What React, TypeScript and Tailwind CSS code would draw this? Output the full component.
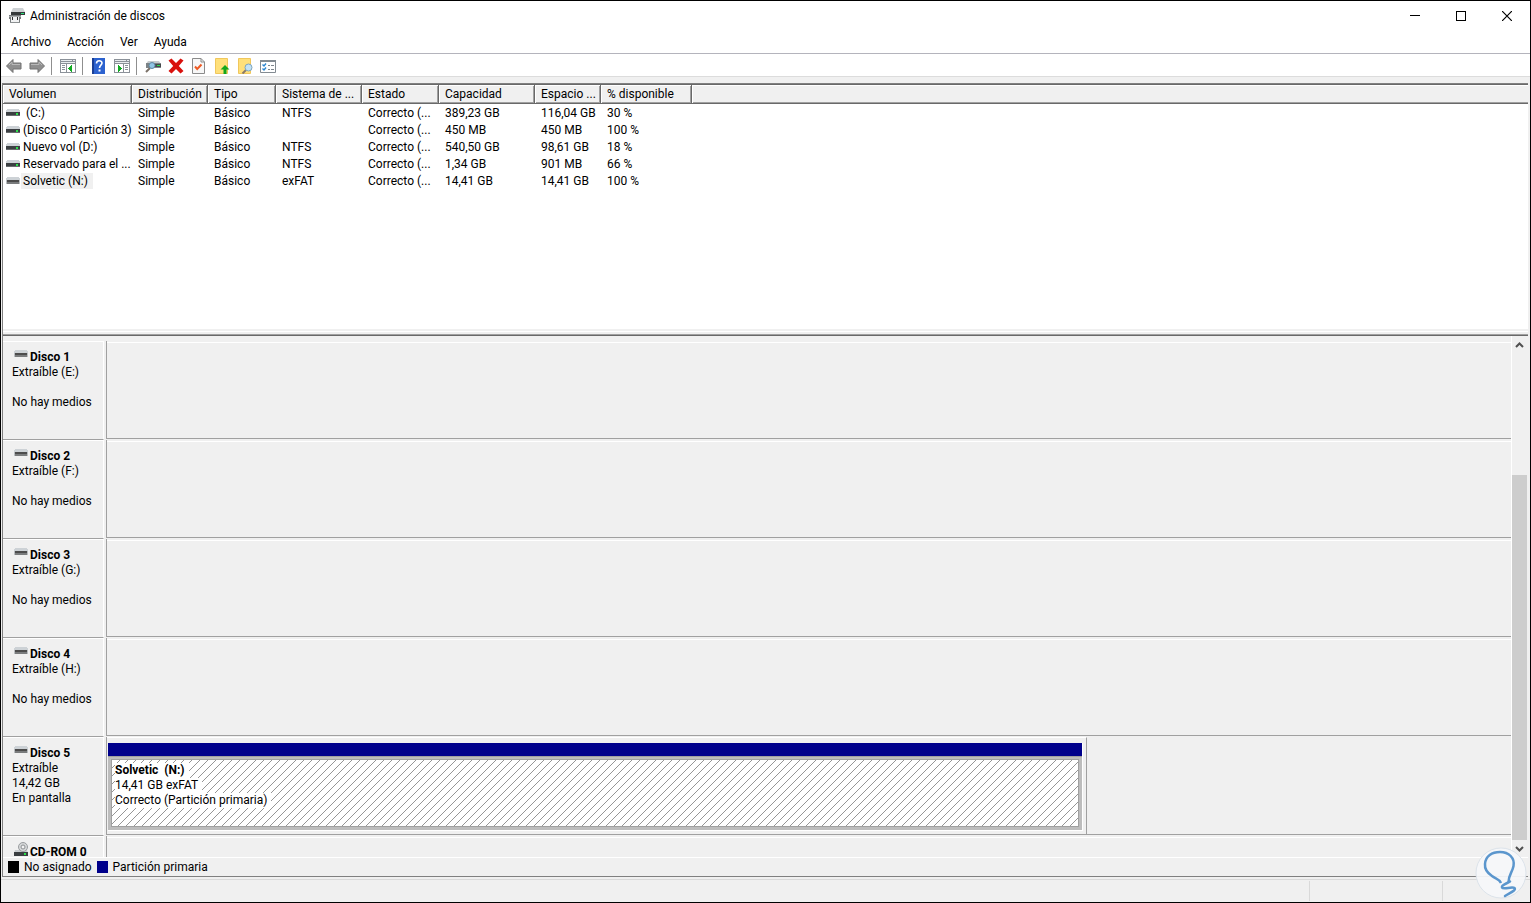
import type { ReactNode } from 'react';

const menus = ['Archivo', 'Acción', 'Ver', 'Ayuda'];

const columns = [
    { label: 'Volumen', width: 'w-[129px]' },
    { label: 'Distribución', width: 'w-[76px]' },
    { label: 'Tipo', width: 'w-[68px]' },
    { label: 'Sistema de ...', width: 'w-[86px]' },
    { label: 'Estado', width: 'w-[77px]' },
    { label: 'Capacidad', width: 'w-[96px]' },
    { label: 'Espacio ...', width: 'w-[66px]' },
    { label: '% disponible', width: 'w-[91px]' },
];

const volumes = [
    { name: ' (C:)', fs: 'NTFS', capacity: '389,23 GB', free: '116,04 GB', percent: '30 %' },
    { name: '(Disco 0 Partición 3)', fs: '', capacity: '450 MB', free: '450 MB', percent: '100 %' },
    { name: 'Nuevo vol (D:)', fs: 'NTFS', capacity: '540,50 GB', free: '98,61 GB', percent: '18 %' },
    { name: 'Reservado para el ...', fs: 'NTFS', capacity: '1,34 GB', free: '901 MB', percent: '66 %' },
    { name: 'Solvetic (N:)', fs: 'exFAT', capacity: '14,41 GB', free: '14,41 GB', percent: '100 %', removable: true },
];

const disks = [
    { name: 'Disco 1', lines: ['Extraíble (E:)', '', 'No hay medios'] },
    { name: 'Disco 2', lines: ['Extraíble (F:)', '', 'No hay medios'] },
    { name: 'Disco 3', lines: ['Extraíble (G:)', '', 'No hay medios'] },
    { name: 'Disco 4', lines: ['Extraíble (H:)', '', 'No hay medios'] },
    { name: 'Disco 5', lines: ['Extraíble', '14,42 GB', 'En pantalla'], partition: true },
];

function DriveIcon({ removable = false }: { removable?: boolean }) {
    return (
        <svg width="14" height="8" viewBox="0 0 14 8" className="shrink-0" shapeRendering="crispEdges" aria-hidden="true">
            <path d="M1 0h12v1h1v2H0V1h1z" fill="#cdd2d6" />
            <path d="M0 3h14v4H0z" fill={removable ? '#b9bdc0' : '#3b3f42'} />
            {removable ? (
                <>
                    <path d="M1 3h12v2H1z" fill="#4c4c4c" />
                    <path d="M1 5h12v2H1z" fill="#7a7c7d" />
                </>
            ) : (
                <>
                    <path d="M0 6h14v1H0z" fill="#686c6e" />
                    <path d="M10 4h2v2h-2z" fill="#2be04a" />
                </>
            )}
        </svg>
    );
}

function CdIcon() {
    return (
        <svg width="14" height="16" viewBox="0 0 14 16" className="shrink-0" aria-hidden="true">
            <path d="M1 9h12l1 3H0z" fill="#c9cdd0" />
            <circle cx="9" cy="6" r="4.500" fill="#d5d7d8" stroke="#9a9da0" />
            <circle cx="9" cy="6" r="2" fill="#f3f3f3" stroke="#8d9093" />
            <path d="M0 11h14v4H0z" fill="#3b3f42" />
            <path d="M10 12h2v2h-2z" fill="#2be04a" />
        </svg>
    );
}

function AppIcon() {
    return (
        <svg width="16" height="16" viewBox="0 0 16 16" aria-hidden="true">
            <path d="M4 0h10l2 4H2z" fill="#cdd1d4" />
            <path d="M2 4h14v3H2z" fill="#35393b" />
            <path d="M12 5h3v1h-3z" fill="#2be07a" />
            <path d="M0 7h12v3H0z" fill="#a9adaf" />
            <path d="M1 9h10v6H1z" fill="#f1f2f3" />
            <path d="M0 7h12v1H0zM0 9h2v2H0zM10 9h2v2h-2zM1 11h1v4H1zM10 11h1v4h-1z" fill="#75797b" />
            <path d="M3 9h1v3H3zM8 9h1v3H8z" fill="#2d2f31" />
            <path d="M1 14h10v1H1z" fill="#8c9092" />
        </svg>
    );
}

function Arrow({ flip = false }: { flip?: boolean }) {
    return (
        <svg width="16" height="16" viewBox="0 0 16 16" aria-hidden="true">
            <path
                d={flip ? 'M15.500 8 9 1.500V5H1v6h8v3.500z' : 'M.5 8 7 1.500V5h8v6H7v3.500z'}
                fill="#8f8f8f"
                stroke="#737373"
            />
            <path d={flip ? 'M2 6.500h8V4l3 3' : 'M3 7l3-3v2.500h8'} fill="none" stroke="#b9b9b9" />
        </svg>
    );
}

function PaneIcon({ right = false }: { right?: boolean }) {
    return (
        <svg width="16" height="14" viewBox="0 0 16 14" shapeRendering="crispEdges" aria-hidden="true">
            <path d="M0 0h16v14H0z" fill="#8b9199" />
            <path d="M1 1h11v1H1zM13 1h2v1h-2zM1 3h14v1H1z" fill="#e9ecef" />
            <path d="M1 5h14v8H1z" fill="#fff" />
            {right ? (
                <>
                    <path d="M9 5h1v8H9zM11 6h3v1h-3zM11 8h3v1h-3zM11 10h3v1h-3z" fill="#8b9199" />
                    <path d="M4 6h1v1h1v1h1v1h1v1H7v1H6v1H5v1H4z" fill="#10aa22" />
                </>
            ) : (
                <>
                    <path d="M6 5h1v8H6zM2 6h3v1H2zM2 8h3v1H2zM2 10h3v1H2z" fill="#8b9199" />
                    <path d="M12 6h-1v1h-1v1H9v1H8v1h1v1h1v1h1v1h1z" fill="#10aa22" />
                </>
            )}
        </svg>
    );
}

function HelpIcon() {
    return (
        <svg width="13" height="16" viewBox="0 0 13 16" aria-hidden="true">
            <path d="M0 0h13v16H0z" fill="#2c62cf" />
            <path d="M0 0h2v16H0z" fill="#1b3f94" />
            <path d="M4.500 5.500C4.500 1.800 10 2 10 5c0 2.200-2.500 2.200-2.500 5" fill="none" stroke="#fff" strokeWidth="1.600" />
            <path d="M6.500 11.500h2v2h-2z" fill="#fff" />
        </svg>
    );
}

function RescanIcon() {
    return (
        <svg width="16" height="16" viewBox="0 0 16 16" aria-hidden="true">
            <path d="M3 3h11l2 3H1z" fill="#c6cbce" />
            <path d="M1 5h15v5H1z" fill="#7d8386" />
            <path d="M9 6h7v3H9z" fill="#454a4d" />
            <path d="M12 7h3v1h-3z" fill="#2be04a" />
            <path d="M5 10l-4 4" stroke="#7b7168" strokeWidth="2" />
            <circle cx="7" cy="7.500" r="3" fill="#8fc4e4" stroke="#5f87a0" />
        </svg>
    );
}

function DeleteIcon() {
    return (
        <svg width="16" height="16" viewBox="0 0 16 16" aria-hidden="true">
            <path d="M3.500.5 8 5 12.500.5 15.500 2.500 10.800 8 15.500 13 12.500 15.500 8 11 3.500 15.500.5 13 5.200 8 .5 2.500z" fill="#d9110d" />
        </svg>
    );
}

function CheckDocIcon() {
    return (
        <svg width="13" height="16" viewBox="0 0 13 16" aria-hidden="true">
            <path d="M.5.5H9L12.500 4v11.500H.5z" fill="#f7f7f7" stroke="#8b8b8b" />
            <path d="M9 .5V4h3.500" fill="none" stroke="#8b8b8b" />
            <path d="M3 8.500 5.200 11 9.500 6.500" fill="none" stroke="#ee5a24" strokeWidth="2" />
        </svg>
    );
}

function FolderIcon({ search = false }: { search?: boolean }) {
    return (
        <svg width="16" height="16" viewBox="0 0 16 16" aria-hidden="true">
            <path d="M1.500.5h12v15h-12z" fill="#ffe07a" stroke="#f0c75c" />
            {search ? (
                <>
                    <path d="M9 12 5.500 15.500" stroke="#8a7a68" strokeWidth="2" />
                    <circle cx="11.500" cy="9.500" r="3.500" fill="#c3e2f5" stroke="#7fa6bd" />
                </>
            ) : (
                <path d="M11 7 15.500 11.500h-3V16H9.500v-4.500h-3z" fill="#12a71c" />
            )}
        </svg>
    );
}

function OptionsIcon() {
    return (
        <svg width="16" height="13" viewBox="0 0 16 13" aria-hidden="true">
            <path d="M.5.5h15v12H.5z" fill="#fff" stroke="#838b92" />
            <path d="M0 0h16v2H0z" fill="#838b92" />
            <path d="M2.500 4.500l1.500 1.500 2-2.500M2.500 8.500 4 10l2-2.500" fill="none" stroke="#2c87d2" strokeWidth="1.400" />
            <path d="M8 5.500h2M11 5.500h3M8 9.500h2M11 9.500h3" stroke="#7d858c" />
        </svg>
    );
}

function ToolButton({ label, children }: { label: string; children: ReactNode }) {
    return (
        <button type="button" aria-label={label} className="flex h-[20px] w-[23px] items-center justify-center">
            {children}
        </button>
    );
}

function Divider() {
    return <div className="mr-1 ml-[3px] h-[18px] w-px bg-[#8f8f8f]" />;
}

function Partition() {
    return (
        <div className="h-[97px] w-[69.8%] border-t border-r border-t-white border-r-[#a0a0a0] pt-[5px] pr-[3px] pl-px">
            <div className="border-r border-b border-white">
                <div className="h-[14px] border-b border-[#a0a0a0] bg-[#00008b]" />
                <div className="bg-[#bdbdbd] px-[3px] pt-[2px] pb-[3px]">
                    <div className="relative h-[68px] overflow-hidden border border-[#a0a0a0] bg-white">
                        <svg className="absolute inset-0 h-full w-full" shapeRendering="crispEdges" aria-hidden="true">
                            <defs>
                                <pattern id="hatch" width="8" height="8" patternUnits="userSpaceOnUse">
                                    <path
                                        d="M7 0h1v1H7zM6 1h1v1H6zM5 2h1v1H5zM4 3h1v1H4zM3 4h1v1H3zM2 5h1v1H2zM1 6h1v1H1zM0 7h1v1H0z"
                                        fill="#969696"
                                    />
                                </pattern>
                            </defs>
                            <rect width="100%" height="100%" fill="url(#hatch)" />
                        </svg>
                        <div className="relative flex flex-col items-start pt-[3px] pl-[3px] leading-[15px]">
                            <strong className="bg-white pr-1 whitespace-pre">Solvetic  (N:)</strong>
                            <span className="bg-white pr-1">14,41 GB exFAT</span>
                            <span className="bg-white pr-1">Correcto (Partición primaria)</span>
                        </div>
                    </div>
                </div>
            </div>
        </div>
    );
}

function DiskRow({ name, lines, children }: { name: string; lines: string[]; children?: ReactNode }) {
    return (
        <div className="flex h-[99px] shrink-0">
            <div className="w-[101px] shrink-0 border-t border-r border-b border-t-white border-r-white border-b-[#a0a0a0] pt-2 pl-[9px] leading-[15px] whitespace-nowrap">
                <div className="flex h-[15px] items-start gap-[2px] pl-[2px]">
                    <DriveIcon removable />
                    <strong>{name}</strong>
                </div>
                {lines.map((line, i) => (
                    <div key={i} className="h-[15px]">{line}</div>
                ))}
            </div>
            <div className="mb-px ml-[2px] flex-1 border-b border-l border-[#a0a0a0]">
                {children ?? <div className="mt-px h-px bg-white" />}
            </div>
        </div>
    );
}

function CdRomRow() {
    return (
        <div className="flex min-h-0 flex-1">
            <div className="w-[101px] shrink-0 border-t border-r border-white pt-1 pl-[11px] leading-[15px]">
                <div className="flex items-start gap-[2px] whitespace-nowrap">
                    <CdIcon />
                    <strong className="pt-1">CD-ROM 0</strong>
                </div>
            </div>
            <div className="ml-[2px] flex-1 border-l border-[#a0a0a0]">
                <div className="mt-px h-px bg-white" />
            </div>
        </div>
    );
}

function WatermarkBulb() {
    return (
        <svg className="absolute right-[3px] bottom-[3px]" width="52" height="52" viewBox="0 0 52 52" aria-hidden="true">
            <circle cx="26" cy="26" r="25" fill="#f6f8fa" fillOpacity="0.93" stroke="#dce3ea" />
            <path
                d="M26 36C24 31.500 21 32 17 29 12.500 26 9.500 22 10 17 10.500 9 17 5 25 5c9 0 15 6 13.500 14-1 6-5 9-5 16"
                fill="none"
                stroke="#5b96cd"
                strokeWidth="2.500"
            />
            <path
                d="M35 34.500C31 37 26 38 27 40.500c1.500 2.500 10-1.500 12.500.5 2 2.500-5 5-9.500 8"
                fill="none"
                stroke="#5b96cd"
                strokeWidth="2.500"
                strokeLinecap="round"
            />
        </svg>
    );
}

export default function App() {
    return (
        <div className="relative flex h-screen flex-col overflow-hidden border border-black bg-[#f0f0f0] font-[Roboto,'Open_Sans',sans-serif] text-[12px] text-black">
            <header className="flex h-[30px] shrink-0 items-center bg-white pl-2">
                <AppIcon />
                <h1 className="flex-1 pl-[5px]">Administración de discos</h1>
                <button type="button" aria-label="Minimizar" className="flex h-[28px] w-[46px] items-center justify-center">
                    <svg width="10" height="10" shapeRendering="crispEdges"><path d="M0 4h10v1H0z" /></svg>
                </button>
                <button type="button" aria-label="Maximizar" className="flex h-[28px] w-[46px] items-center justify-center">
                    <svg width="10" height="10" shapeRendering="crispEdges"><path d="M.5.5h9v9h-9z" fill="none" stroke="#000" /></svg>
                </button>
                <button type="button" aria-label="Cerrar" className="flex h-[28px] w-[46px] items-center justify-center">
                    <svg width="10" height="10"><path d="M0 0l10 10M10 0 0 10" fill="none" stroke="#000" strokeWidth="1.200" /></svg>
                </button>
            </header>

            <nav className="flex h-[23px] shrink-0 items-center gap-4 border-b border-[#b4b4bc] bg-white pl-[10px]">
                {menus.map((menu) => (
                    <button key={menu} type="button">{menu}</button>
                ))}
            </nav>

            <div className="flex h-[23px] shrink-0 items-center border-b border-[#dcdcdc] bg-white pt-[2px] pl-px">
                <ToolButton label="Atrás"><Arrow /></ToolButton>
                <ToolButton label="Adelante"><Arrow flip /></ToolButton>
                <Divider />
                <ToolButton label="Árbol de consola"><PaneIcon /></ToolButton>
                <Divider />
                <ToolButton label="Ayuda"><HelpIcon /></ToolButton>
                <ToolButton label="Panel de acciones"><PaneIcon right /></ToolButton>
                <Divider />
                <ToolButton label="Actualizar"><RescanIcon /></ToolButton>
                <ToolButton label="Eliminar"><DeleteIcon /></ToolButton>
                <ToolButton label="Propiedades"><CheckDocIcon /></ToolButton>
                <ToolButton label="Abrir"><FolderIcon /></ToolButton>
                <ToolButton label="Explorar"><FolderIcon search /></ToolButton>
                <ToolButton label="Opciones"><OptionsIcon /></ToolButton>
            </div>

            <main className="mr-[2px] ml-px mt-[6px] flex min-h-0 flex-1 flex-col border-t border-b border-l border-[#808080]">
                <section className="h-[252px] shrink-0 border-t border-b border-[#696969]">
                    <div className="h-[244px] bg-white">
                        <table className="w-full table-fixed border-separate border-spacing-0 text-left">
                            <thead>
                                <tr className="bg-[#f0f0f0] leading-[17px]">
                                    {columns.map((col) => (
                                        <th
                                            key={col.label}
                                            className={`${col.width} border-r border-b border-[#696969] p-0 pt-px pl-[6px] font-normal whitespace-nowrap shadow-[inset_1px_1px_0_#fff,inset_-1px_-1px_0_#a0a0a0]`}
                                        >
                                            {col.label}
                                        </th>
                                    ))}
                                    <th className="border-b border-[#696969] p-0 shadow-[inset_1px_1px_0_#fff,inset_0_-1px_0_#a0a0a0]" />
                                </tr>
                            </thead>
                            <tbody>
                                {volumes.map((v) => (
                                    <tr key={v.name} className="leading-[16px] whitespace-nowrap">
                                        <td className="p-0 pt-px pl-[3px]">
                                            <div className="flex items-center gap-px">
                                                <DriveIcon removable={v.removable} />
                                                <span className={`pl-[2px] whitespace-pre ${v.removable ? 'bg-[#f0f0f0] pr-[5px]' : ''}`}>{v.name}</span>
                                            </div>
                                        </td>
                                        <td className="p-0 pt-px pl-[6px]">Simple</td>
                                        <td className="p-0 pt-px pl-[6px]">Básico</td>
                                        <td className="p-0 pt-px pl-[6px]">{v.fs}</td>
                                        <td className="p-0 pt-px pl-[6px]">Correcto (...</td>
                                        <td className="p-0 pt-px pl-[6px]">{v.capacity}</td>
                                        <td className="p-0 pt-px pl-[6px]">{v.free}</td>
                                        <td className="p-0 pt-px pl-[6px]">{v.percent}</td>
                                        <td className="p-0" />
                                    </tr>
                                ))}
                            </tbody>
                        </table>
                    </div>
                    <div className="mt-[2px] h-px bg-white" />
                    <div className="mt-[2px] h-px bg-[#a0a0a0]" />
                </section>

                <section className="flex min-h-0 flex-1">
                    <div className="flex min-w-0 flex-1 flex-col pt-[5px]">
                        {disks.map((disk) => (
                            <DiskRow key={disk.name} name={disk.name} lines={disk.lines}>
                                {disk.partition && <Partition />}
                            </DiskRow>
                        ))}
                        <CdRomRow />
                    </div>
                    <div className="mr-px flex w-4 shrink-0 flex-col items-center border-l border-white bg-[#f0f0f0]">
                        <button type="button" aria-label="Desplazar arriba" className="flex h-[17px] w-full items-center justify-center">
                            <svg width="9" height="6"><path d="M1 5l3.500-3.500L8 5" fill="none" stroke="#505050" strokeWidth="2" /></svg>
                        </button>
                        <div className="flex w-full flex-1 flex-col justify-end">
                            <div className="h-[75%] bg-[#cdcdcd]" />
                        </div>
                        <button type="button" aria-label="Desplazar abajo" className="flex h-[17px] w-full items-center justify-center">
                            <svg width="9" height="6"><path d="M1 1l3.500 3.500L8 1" fill="none" stroke="#505050" strokeWidth="2" /></svg>
                        </button>
                    </div>
                </section>

                <div className="flex h-[19px] shrink-0 items-center border-t border-white pl-[5px]">
                    <span className="h-3 w-[11px] bg-black" />
                    <span className="pl-[5px]">No asignado</span>
                    <span className="ml-[5px] h-3 w-[11px] bg-[#00008b]" />
                    <span className="pl-[5px]">Partición primaria</span>
                </div>
            </main>

            <footer className="mt-[2px] flex h-[23px] shrink-0 justify-end border-t border-[#d9d9d9] py-px">
                <div className="w-[133px] border-l border-[#d9d9d9]" />
                <div className="w-[88px] border-l border-[#d9d9d9]" />
            </footer>
            <WatermarkBulb />
        </div>
    );
}
